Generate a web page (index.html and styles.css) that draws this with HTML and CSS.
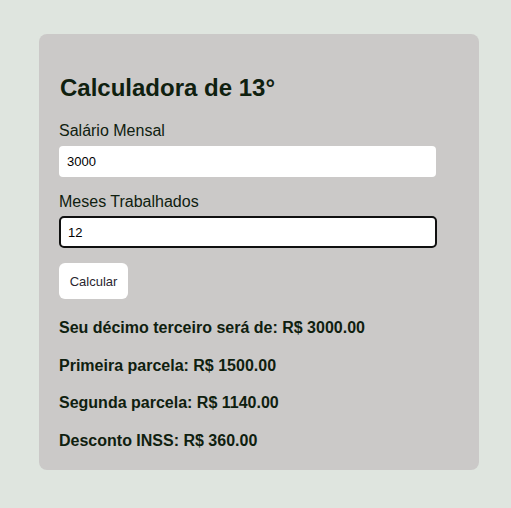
FILE: index.html
```html
<!DOCTYPE html>
<html lang="pt-BR">
<head>
<meta charset="utf-8">
<title>Calculadora de 13°</title>
<link rel="stylesheet" href="styles.css">
</head>
<body>
<div class="card">
  <h2 class="title">Calculadora de 13°</h2>
  <label class="label" for="salario">Salário Mensal</label>
  <input class="field" id="salario" type="text" value="3000">
  <label class="label label-tight" for="meses">Meses Trabalhados</label>
  <input class="field field-focus" id="meses" type="text" value="12">
  <button class="btn">Calcular</button>
  <div class="results">
    <p class="result">Seu décimo terceiro será de: R$ 3000.00</p>
    <p class="result">Primeira parcela: R$ 1500.00</p>
    <p class="result">Segunda parcela: R$ 1140.00</p>
    <p class="result">Desconto INSS: R$ 360.00</p>
  </div>
</div>
</body>
</html>
```
FILE: styles.css
```css
html, body {
  margin: 0;
  padding: 0;
}
body {
  background: #dfe5df;
  font-family: "Liberation Sans", Arial, sans-serif;
  color: #0f200f;
  padding: 34px 0 0 39px;
  height: 508px;
  box-sizing: border-box;
}
.card {
  width: 440px;
  height: 436px;
  box-sizing: border-box;
  background: #cbc9c8;
  border-radius: 8px;
  padding: 20px 20px;
  display: flex;
  flex-direction: column;
  align-items: flex-start;
}
.title {
  font-size: 24px;
  font-weight: bold;
  margin: 20px 0 20px 1px;
  line-height: 28px;
}
.label {
  font-size: 16px;
  line-height: 18px;
  margin: 0 0 6px 0;
}
.label-tight {
  margin-bottom: 5px;
}
.field {
  width: 377px;
  height: 31px;
  box-sizing: border-box;
  border: none;
  border-radius: 4px;
  background: #fff;
  padding: 0 8px;
  font-family: "Liberation Sans", Arial, sans-serif;
  font-size: 13px;
  color: #000;
  margin: 0 0 16px 0;
}
.field-focus {
  width: 378px;
  height: 33px;
  border: 2px solid #101010;
  border-radius: 5px;
  padding: 0 7px;
  outline: none;
  margin: 0;
}
.btn {
  margin-top: 15px;
  width: 69px;
  height: 36px;
  border: none;
  border-radius: 6px;
  background: #fff;
  color: #2a2630;
  font-family: "Liberation Sans", Arial, sans-serif;
  font-size: 13px;
  padding: 0;
}
.results {
  margin-top: 20px;
  display: flex;
  flex-direction: column;
  gap: 19px;
}
.result {
  margin: 0;
  font-size: 16px;
  font-weight: bold;
  line-height: 18.5px;
  color: #0f200f;
}
```
